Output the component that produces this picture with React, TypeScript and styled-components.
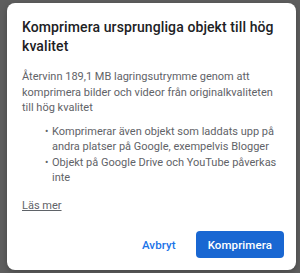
import React from "react";
import styled, { createGlobalStyle } from "styled-components";

const Global = createGlobalStyle`
  html, body { margin: 0; padding: 0; }
  body { width: 300px; height: 273px; overflow: hidden; background: #5e5e5e; }
`;

const Backdrop = styled.div`
  width: 300px;
  height: 273px;
  box-sizing: border-box;
  padding: 3px 4px 3px 7px;
  background: #5e5e5e;
  display: flex;
`;

const Dialog = styled.div`
  flex: 1;
  background: #ffffff;
  border-radius: 8px;
  box-shadow: 0 2px 6px rgba(0, 0, 0, 0.25);
  padding: 15px 12px 12px 15px;
  display: flex;
  flex-direction: column;
  font-family: Roboto, "Liberation Sans", sans-serif;
`;

const Title = styled.h2`
  margin: 0 4px 0 0;
  font-family: Roboto, "Open Sans", sans-serif;
  font-size: 14px;
  font-weight: 500;
  letter-spacing: 0.1px;
  line-height: 19px;
  color: #202124;
`;

const Text = styled.p`
  margin: 13px 4px 0 0;
  font-size: 11px;
  line-height: 15.5px;
  color: #5f6368;
`;

const List = styled.ul`
  margin: 8px 4px 0 0;
  padding: 0 0 0 23px;
  list-style: none;
  font-size: 11px;
  line-height: 15.5px;
  color: #5f6368;
`;

const Item = styled.li`
  display: flex;
  &::before {
    content: "•";
    flex: none;
    width: 7px;
    font-size: 10px;
  }
`;

const More = styled.a`
  margin-top: 12px;
  align-self: flex-start;
  font-size: 11px;
  line-height: 15.5px;
  color: #5f6368;
  text-decoration: underline;
`;

const Actions = styled.div`
  margin-top: auto;
  display: flex;
  justify-content: flex-end;
  gap: 8px;
`;

const Button = styled.button<{ $primary?: boolean }>`
  height: 27px;
  padding: 0 12px;
  border: none;
  border-radius: 4px;
  font-family: Roboto, sans-serif;
  font-size: 11.5px;
  font-weight: 500;
  letter-spacing: 0.1px;
  cursor: pointer;
  background: ${(p) => (p.$primary ? "#1967d2" : "transparent")};
  color: ${(p) => (p.$primary ? "#ffffff" : "#1a73e8")};
  ${(p) => (p.$primary ? "min-width: 86px;" : "")}
`;

export default function App() {
  return (
    <>
      <Global />
      <Backdrop>
        <Dialog>
          <Title>Komprimera ursprungliga objekt till hög kvalitet</Title>
          <Text>
            Återvinn 189,1 MB lagringsutrymme genom att komprimera bilder och videor från
            originalkvaliteten till hög kvalitet
          </Text>
          <List>
            <Item>Komprimerar även objekt som laddats upp på andra platser på Google, exempelvis Blogger</Item>
            <Item>Objekt på Google Drive och YouTube påverkas inte</Item>
          </List>
          <More href="#">Läs mer</More>
          <Actions>
            <Button>Avbryt</Button>
            <Button $primary>Komprimera</Button>
          </Actions>
        </Dialog>
      </Backdrop>
    </>
  );
}
